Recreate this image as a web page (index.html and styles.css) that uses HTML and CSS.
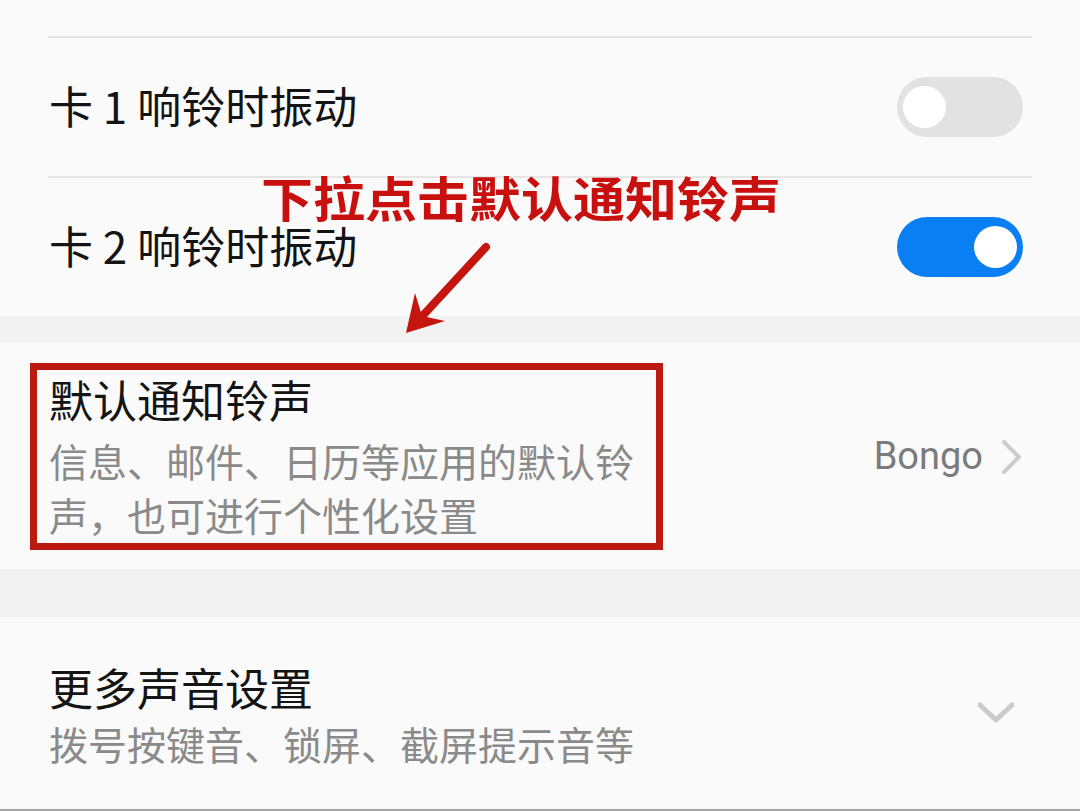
FILE: index.html
```html
<!DOCTYPE html>
<html lang="zh-CN">
<head>
<meta charset="utf-8">
<title>声音设置</title>
<link rel="stylesheet" href="styles.css">
</head>
<body>
<div class="page">
  <section class="group group-first">
    <div class="row">
      <span class="label">卡 1 响铃时振动</span>
      <span class="switch"><span class="knob"></span></span>
    </div>
    <div class="row">
      <span class="label">卡 2 响铃时振动</span>
      <span class="switch on"><span class="knob"></span></span>
    </div>
  </section>
  <div class="band band-a"></div>
  <section class="group group-ring">
    <div class="item">
      <div class="texts">
        <div class="title">默认通知铃声</div>
        <div class="sub sub-wrap">信息、邮件、日历等应用的默认铃声，也可进行个性化设置</div>
      </div>
      <div class="value">
        <span class="value-text">Bongo</span>
        <svg class="chev-right" width="24" height="36" viewBox="0 0 24 36"><path d="M4 3 L19 18 L4 33" fill="none" stroke="#cdcdcd" stroke-width="4" stroke-linecap="round" stroke-linejoin="round"/></svg>
      </div>
    </div>
    <div class="highlight"></div>
  </section>
  <div class="band band-b"></div>
  <section class="group group-more">
    <div class="item">
      <div class="texts">
        <div class="title">更多声音设置</div>
        <div class="sub">拨号按键音、锁屏、截屏提示音等</div>
      </div>
      <div class="value">
        <svg class="chev-down" width="40" height="26" viewBox="0 0 40 26"><path d="M4 5 L20 20 L36 5" fill="none" stroke="#cbcbcb" stroke-width="5" stroke-linecap="round" stroke-linejoin="round"/></svg>
      </div>
    </div>
  </section>

  <div class="annotation">下拉点击默认通知铃声</div>
  <svg class="arrow" width="100" height="100" viewBox="0 0 100 100">
    <path d="M86 7 L16 83" fill="none" stroke="#c4150f" stroke-width="8" stroke-linecap="round"/>
    <path d="M6 93 L15 53 L22 76 L45 81 Z" fill="#c4150f"/>
  </svg>
</div>
</body>
</html>
```

FILE: styles.css
```css
html, body {
  margin: 0;
  padding: 0;
}
body {
  background: #fafafa;
  font-family: "Noto Sans CJK SC", "Noto Sans", sans-serif;
  color: #141414;
  width: 1080px;
  height: 811px;
  overflow: hidden;
}
.page {
  position: relative;
  width: 1080px;
  height: 811px;
}
.group {
  background: #fafafa;
}
.group-first {
  padding-top: 36px;
}
.row {
  display: flex;
  align-items: center;
  justify-content: space-between;
  height: 138px;
  margin: 0 48px;
  border-top: 2px solid #e5e5e5;
}
.label {
  font-size: 44px;
  line-height: 54px;
  padding-left: 1px;
  padding-bottom: 4px;
}
.switch {
  display: flex;
  align-items: center;
  width: 126px;
  height: 60px;
  border-radius: 30px;
  background: #e2e2e2;
  padding: 0 6px;
  box-sizing: border-box;
  margin-right: 9px;
}
.switch.on {
  background: #0a7ff4;
  justify-content: flex-end;
}
.knob {
  width: 43px;
  height: 42px;
  border-radius: 50%;
  background: #ffffff;
}
.band {
  background: #f2f2f2;
}
.band-a {
  height: 26px;
}
.band-b {
  height: 48px;
}
.group-ring {
  position: relative;
  height: 227px;
}
.item {
  display: flex;
  align-items: center;
  justify-content: space-between;
  padding: 0 56px 0 49px;
  height: 100%;
  box-sizing: border-box;
}
.group-ring .item {
  padding-top: 1px;
}
.title {
  font-size: 44px;
  line-height: 54px;
  color: #141414;
}
.sub {
  font-size: 39px;
  line-height: 54px;
  color: #8a8a8a;
  margin-top: 7px;
}
.sub-wrap {
  width: 600px;
}
.value {
  display: flex;
  align-items: center;
}
.value-text {
  font-family: Roboto, "Liberation Sans", sans-serif;
  font-size: 38px;
  color: #7b7b7b;
  margin-right: 17px;
}
.chev-right {
  display: block;
  margin-top: 2px;
}
.chev-down {
  display: block;
  margin-right: 8px;
  margin-top: -4px;
}
.highlight {
  position: absolute;
  left: 30px;
  top: 21px;
  width: 633px;
  height: 187px;
  border: 7px solid #bb1a10;
  box-sizing: border-box;
}
.group-more {
  height: 192px;
  border-bottom: 2px solid #a6a6a6;
}
.group-more .item {
  padding-top: 4px;
}
.group-more .sub {
  margin-top: 2px;
}
.annotation {
  position: absolute;
  left: 261px;
  top: 168px;
  font-size: 52px;
  line-height: 62px;
  font-weight: 700;
  color: #c8100f;
  white-space: nowrap;
  transform: scaleY(0.92);
  transform-origin: top left;
}
.arrow {
  position: absolute;
  left: 400px;
  top: 240px;
}
```
